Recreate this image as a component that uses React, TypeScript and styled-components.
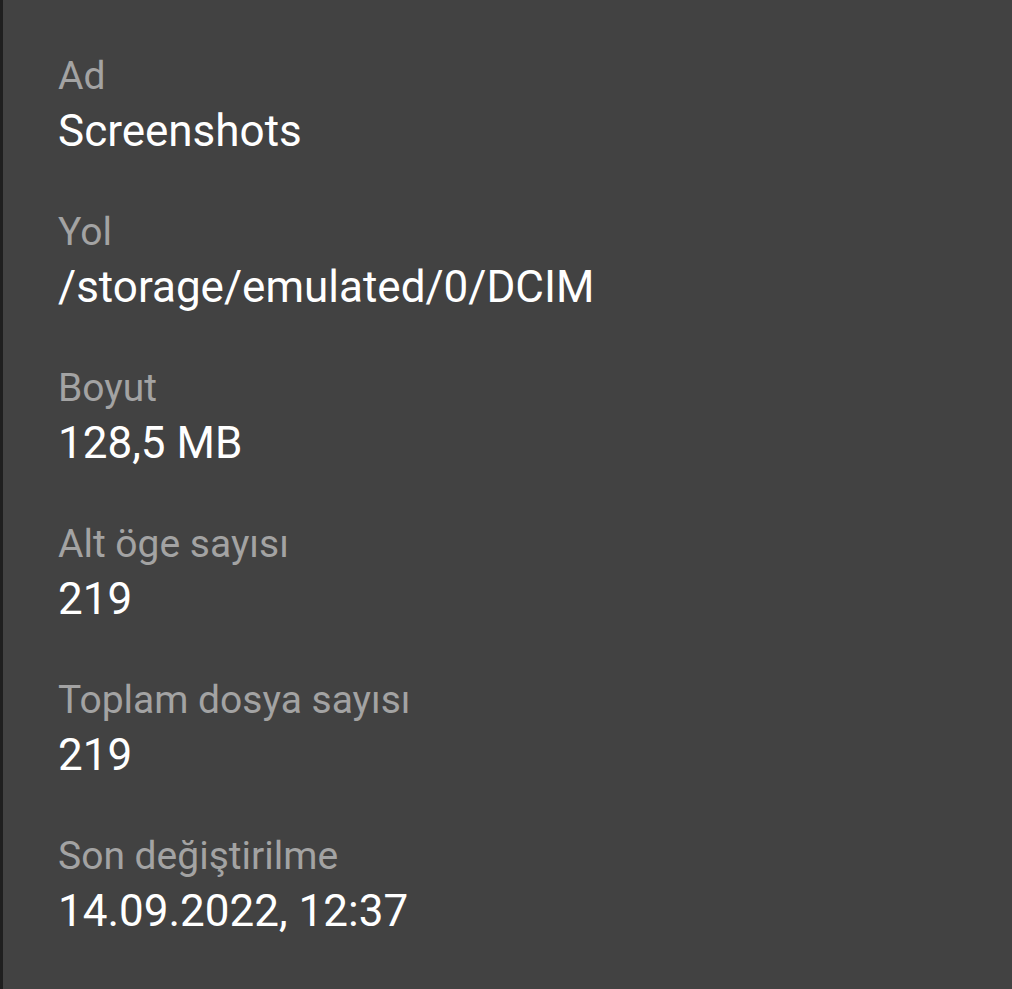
import { FC } from "react";
import styled, { createGlobalStyle } from "styled-components";

const GlobalStyle = createGlobalStyle`
	html, body {
		margin: 0;
		padding: 0;
		background: #1f1f1f;
	}
`;

type Property = { label: string; value: string };

const properties: Property[] = [
	{ label: "Ad", value: "Screenshots" },
	{ label: "Yol", value: "/storage/emulated/0/DCIM" },
	{ label: "Boyut", value: "128,5 MB" },
	{ label: "Alt öge sayısı", value: "219" },
	{ label: "Toplam dosya sayısı", value: "219" },
	{ label: "Son değiştirilme", value: "14.09.2022, 12:37" },
];

const App: FC = () => {
	return (
		<>
			<GlobalStyle />
			<Screen>
				<Panel>
					{properties.map((property) => (
						<Row key={property.label}>
							<Label>{property.label}</Label>
							<Value>{property.value}</Value>
						</Row>
					))}
				</Panel>
			</Screen>
		</>
	);
};

const Screen = styled.div`
	width: 1012px;
	height: 989px;
	display: flex;
	background: #1f1f1f;
	overflow: hidden;
`;

const Panel = styled.div`
	flex: 1;
	margin-left: 3px;
	background: #424242;
	padding: 50px 0 0 55px;
	display: flex;
	flex-direction: column;
	gap: 46px;
	font-family: Roboto, "Noto Sans", sans-serif;
`;

const Row = styled.div`
	display: flex;
	flex-direction: column;
`;

const Label = styled.div`
	font-size: 39px;
	line-height: 52px;
	color: #a3a3a3;
`;

const Value = styled.div`
	font-size: 44px;
	line-height: 58px;
	color: #ffffff;
`;

export default App;
